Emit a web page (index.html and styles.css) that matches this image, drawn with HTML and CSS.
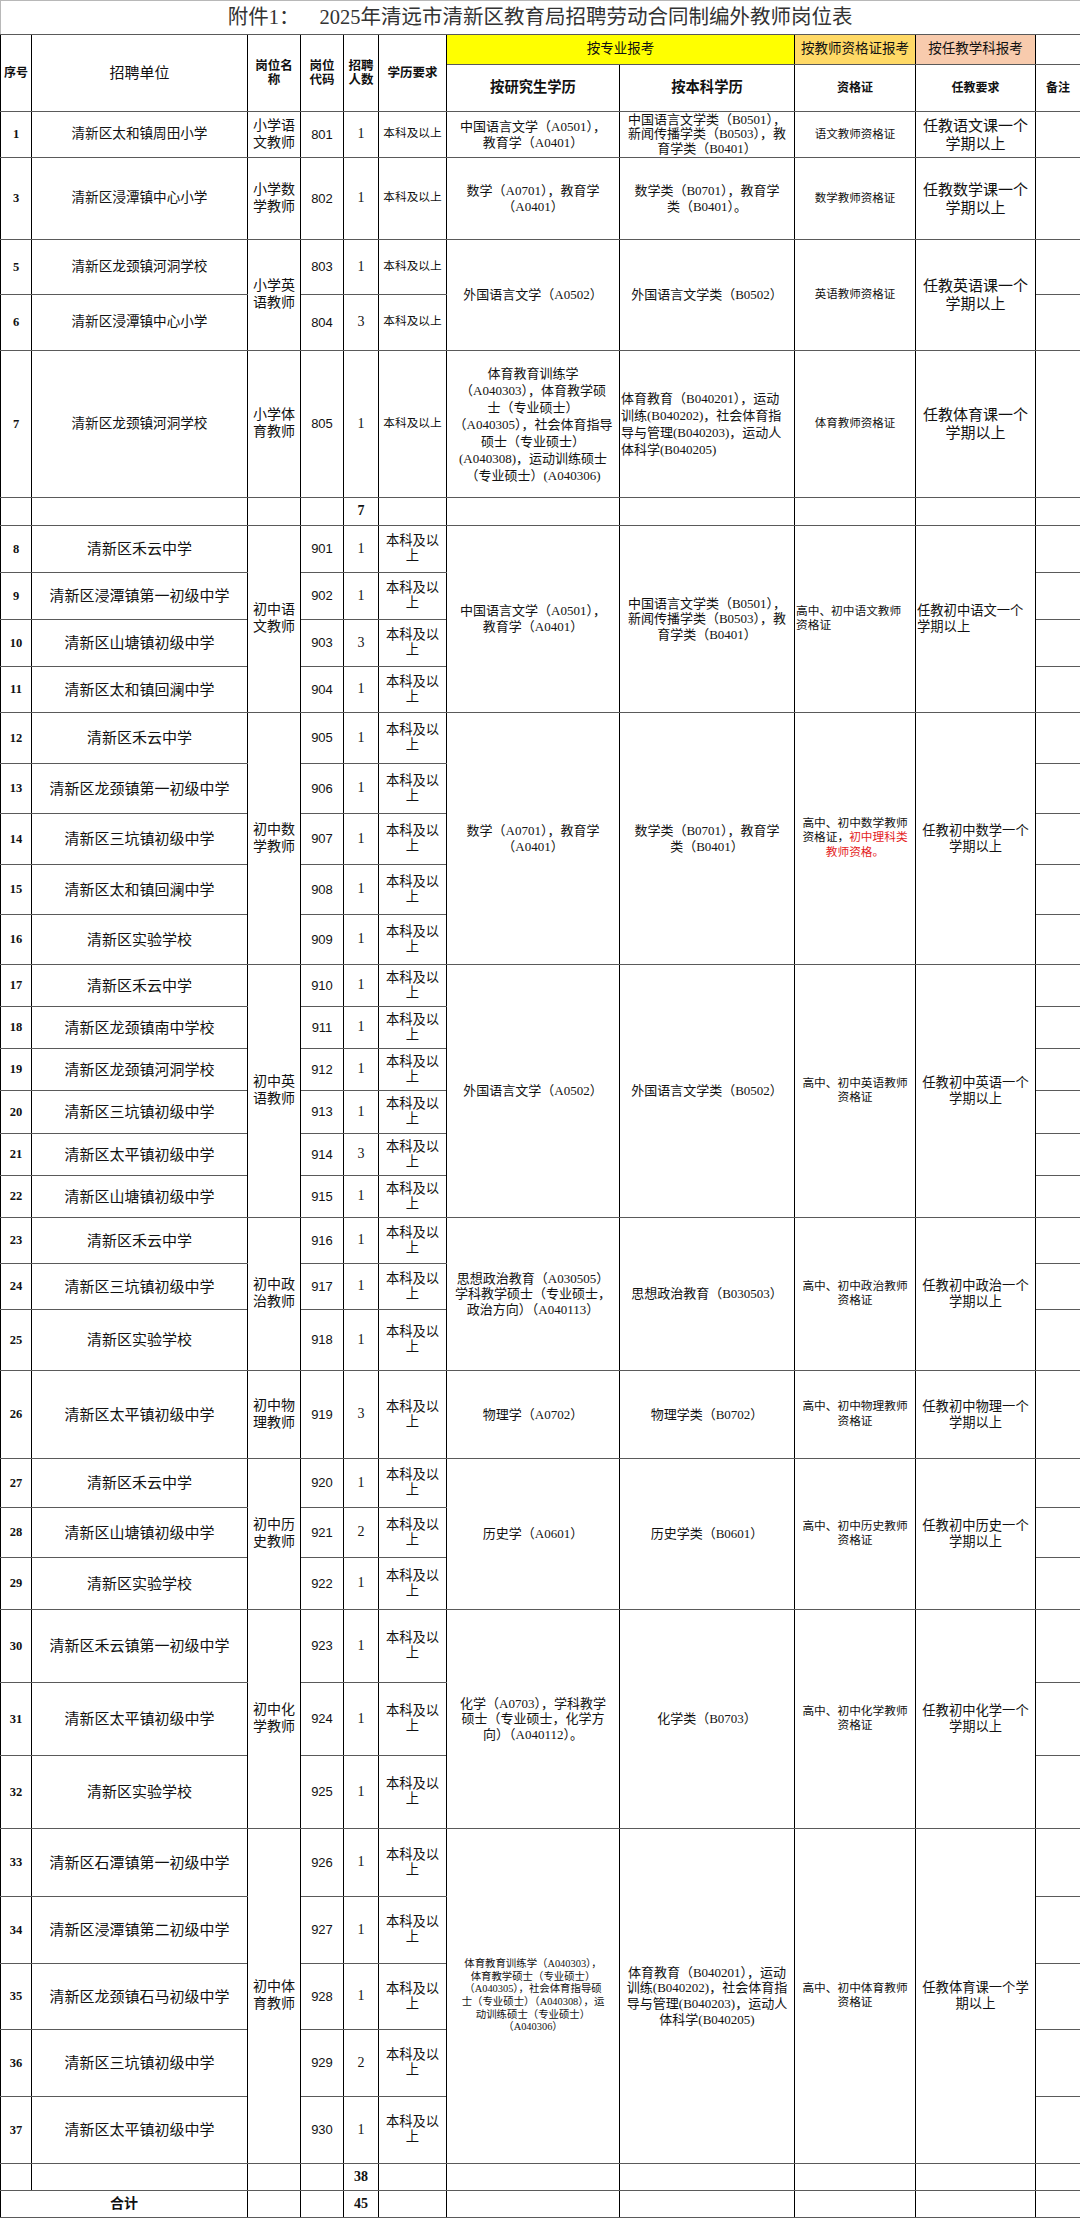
FILE: index.html
```html
<!DOCTYPE html>
<html lang="zh-CN">
<head>
<meta charset="utf-8">
<title>岗位表</title>
<link rel="stylesheet" href="styles.css">
</head>
<body>
<table class="sheet">
<colgroup>
<col class="c1"><col class="c2"><col class="c3"><col class="c4"><col class="c5"><col class="c6"><col class="c7"><col class="c8"><col class="c9"><col class="c10"><col class="c11">
</colgroup>
<tr class="h34"><td class="title" colspan="11">附件1：<span class="gap"></span>2025年清远市清新区教育局招聘劳动合同制编外教师岗位表</td></tr>
<tr class="h30">
<td class="hd no" rowspan="2">序号</td>
<td class="hd unit-h" rowspan="2">招聘单位</td>
<td class="hd sm" rowspan="2">岗位名<br>称</td>
<td class="hd sm" rowspan="2">岗位<br>代码</td>
<td class="hd sm" rowspan="2">招聘<br>人数</td>
<td class="hd sm" rowspan="2">学历要求</td>
<td class="grp yellow" colspan="2">按专业报考</td>
<td class="grp orange">按教师资格证报考</td>
<td class="grp peach">按任教学科报考</td>
<td></td>
</tr>
<tr class="h47">
<td class="hd mid">按研究生学历</td>
<td class="hd mid">按本科学历</td>
<td class="hd xs">资格证</td>
<td class="hd xs">任教要求</td>
<td class="hd xs">备注</td>
</tr>

<tr class="h46">
<td class="no">1</td><td class="unit">清新区太和镇周田小学</td><td class="post">小学语<br>文教师</td><td class="code">801</td><td class="cnt">1</td><td class="edu">本科及以上</td>
<td class="maj">中国语言文学（A0501），<br>教育学（A0401）</td>
<td class="maj tight">中国语言文学类（B0501），<br>新闻传播学类（B0503），教<br>育学类（B0401）</td>
<td class="cert">语文教师资格证</td><td class="req">任教语文课一个<br>学期以上</td><td></td>
</tr>
<tr class="h82">
<td class="no">3</td><td class="unit">清新区浸潭镇中心小学</td><td class="post">小学数<br>学教师</td><td class="code">802</td><td class="cnt">1</td><td class="edu">本科及以上</td>
<td class="maj">数学（A0701），教育学<br>（A0401）</td>
<td class="maj">数学类（B0701），教育学<br>类（B0401）。</td>
<td class="cert">数学教师资格证</td><td class="req">任教数学课一个<br>学期以上</td><td></td>
</tr>
<tr class="h55">
<td class="no">5</td><td class="unit">清新区龙颈镇河洞学校</td><td class="post" rowspan="2">小学英<br>语教师</td><td class="code">803</td><td class="cnt">1</td><td class="edu">本科及以上</td>
<td class="maj" rowspan="2">外国语言文学（A0502）</td>
<td class="maj" rowspan="2">外国语言文学类（B0502）</td>
<td class="cert" rowspan="2">英语教师资格证</td><td class="req" rowspan="2">任教英语课一个<br>学期以上</td><td></td>
</tr>
<tr class="h56">
<td class="no">6</td><td class="unit">清新区浸潭镇中心小学</td><td class="code">804</td><td class="cnt">3</td><td class="edu">本科及以上</td><td></td>
</tr>
<tr class="h147">
<td class="no">7</td><td class="unit">清新区龙颈镇河洞学校</td><td class="post">小学体<br>育教师</td><td class="code">805</td><td class="cnt">1</td><td class="edu">本科及以上</td>
<td class="maj loose">体育教育训练学<br>（A040303），体育教学硕<br>士（专业硕士）<br>（A040305），社会体育指导<br>硕士（专业硕士）<br>(A040308)，运动训练硕士<br>（专业硕士）(A040306)</td>
<td class="maj loose l">体育教育（B040201），运动<br>训练(B040202)，社会体育指<br>导与管理(B040203)，运动人<br>体科学(B040205)</td>
<td class="cert">体育教师资格证</td><td class="req">任教体育课一个<br>学期以上</td><td></td>
</tr>
<tr class="h28">
<td></td><td></td><td></td><td></td><td class="cnt b">7</td><td></td><td></td><td></td><td></td><td></td><td></td>
</tr>

<tr class="h47">
<td class="no">8</td><td class="unit lg">清新区禾云中学</td><td class="post" rowspan="4">初中语<br>文教师</td><td class="code">901</td><td class="cnt">1</td><td class="edu lg">本科及以上</td>
<td class="maj" rowspan="4">中国语言文学（A0501），<br>教育学（A0401）</td>
<td class="maj" rowspan="4">中国语言文学类（B0501），<br>新闻传播学类（B0503），教<br>育学类（B0401）</td>
<td class="cert2 l" rowspan="4">高中、初中语文教师<br>资格证</td><td class="req2 l" rowspan="4">任教初中语文一个<br>学期以上</td><td></td>
</tr>
<tr class="h47"><td class="no">9</td><td class="unit lg">清新区浸潭镇第一初级中学</td><td class="code">902</td><td class="cnt">1</td><td class="edu lg">本科及以上</td><td></td></tr>
<tr class="h47"><td class="no">10</td><td class="unit lg">清新区山塘镇初级中学</td><td class="code">903</td><td class="cnt">3</td><td class="edu lg">本科及以上</td><td></td></tr>
<tr class="h46"><td class="no">11</td><td class="unit lg">清新区太和镇回澜中学</td><td class="code">904</td><td class="cnt">1</td><td class="edu lg">本科及以上</td><td></td></tr>

<tr class="h51">
<td class="no">12</td><td class="unit lg">清新区禾云中学</td><td class="post" rowspan="5">初中数<br>学教师</td><td class="code">905</td><td class="cnt">1</td><td class="edu lg">本科及以上</td>
<td class="maj" rowspan="5">数学（A0701），教育学<br>（A0401）</td>
<td class="maj" rowspan="5">数学类（B0701），教育学<br>类（B0401）</td>
<td class="cert2" rowspan="5">高中、初中数学教师<br>资格证，<span class="red">初中理科类<br>教师资格。</span></td><td class="req2" rowspan="5">任教初中数学一个<br>学期以上</td><td></td>
</tr>
<tr class="h50"><td class="no">13</td><td class="unit lg">清新区龙颈镇第一初级中学</td><td class="code">906</td><td class="cnt">1</td><td class="edu lg">本科及以上</td><td></td></tr>
<tr class="h51"><td class="no">14</td><td class="unit lg">清新区三坑镇初级中学</td><td class="code">907</td><td class="cnt">1</td><td class="edu lg">本科及以上</td><td></td></tr>
<tr class="h50"><td class="no">15</td><td class="unit lg">清新区太和镇回澜中学</td><td class="code">908</td><td class="cnt">1</td><td class="edu lg">本科及以上</td><td></td></tr>
<tr class="h50"><td class="no">16</td><td class="unit lg">清新区实验学校</td><td class="code">909</td><td class="cnt">1</td><td class="edu lg">本科及以上</td><td></td></tr>

<tr class="h42">
<td class="no">17</td><td class="unit lg">清新区禾云中学</td><td class="post" rowspan="6">初中英<br>语教师</td><td class="code">910</td><td class="cnt">1</td><td class="edu lg">本科及以上</td>
<td class="maj" rowspan="6">外国语言文学（A0502）</td>
<td class="maj" rowspan="6">外国语言文学类（B0502）</td>
<td class="cert2" rowspan="6">高中、初中英语教师<br>资格证</td><td class="req2" rowspan="6">任教初中英语一个<br>学期以上</td><td></td>
</tr>
<tr class="h42"><td class="no">18</td><td class="unit lg">清新区龙颈镇南中学校</td><td class="code">911</td><td class="cnt">1</td><td class="edu lg">本科及以上</td><td></td></tr>
<tr class="h42"><td class="no">19</td><td class="unit lg">清新区龙颈镇河洞学校</td><td class="code">912</td><td class="cnt">1</td><td class="edu lg">本科及以上</td><td></td></tr>
<tr class="h43"><td class="no">20</td><td class="unit lg">清新区三坑镇初级中学</td><td class="code">913</td><td class="cnt">1</td><td class="edu lg">本科及以上</td><td></td></tr>
<tr class="h42"><td class="no">21</td><td class="unit lg">清新区太平镇初级中学</td><td class="code">914</td><td class="cnt">3</td><td class="edu lg">本科及以上</td><td></td></tr>
<tr class="h42"><td class="no">22</td><td class="unit lg">清新区山塘镇初级中学</td><td class="code">915</td><td class="cnt">1</td><td class="edu lg">本科及以上</td><td></td></tr>

<tr class="h46">
<td class="no">23</td><td class="unit lg">清新区禾云中学</td><td class="post" rowspan="3">初中政<br>治教师</td><td class="code">916</td><td class="cnt">1</td><td class="edu lg">本科及以上</td>
<td class="maj" rowspan="3">思想政治教育（A030505）<br>学科教学硕士（专业硕士，<br>政治方向）（A040113）</td>
<td class="maj" rowspan="3">思想政治教育（B030503）</td>
<td class="cert2" rowspan="3">高中、初中政治教师<br>资格证</td><td class="req2" rowspan="3">任教初中政治一个<br>学期以上</td><td></td>
</tr>
<tr class="h46"><td class="no">24</td><td class="unit lg">清新区三坑镇初级中学</td><td class="code">917</td><td class="cnt">1</td><td class="edu lg">本科及以上</td><td></td></tr>
<tr class="h61"><td class="no">25</td><td class="unit lg">清新区实验学校</td><td class="code">918</td><td class="cnt">1</td><td class="edu lg">本科及以上</td><td></td></tr>

<tr class="h88">
<td class="no">26</td><td class="unit lg">清新区太平镇初级中学</td><td class="post">初中物<br>理教师</td><td class="code">919</td><td class="cnt">3</td><td class="edu lg">本科及以上</td>
<td class="maj">物理学（A0702）</td><td class="maj">物理学类（B0702）</td>
<td class="cert2">高中、初中物理教师<br>资格证</td><td class="req2">任教初中物理一个<br>学期以上</td><td></td>
</tr>

<tr class="h49">
<td class="no">27</td><td class="unit lg">清新区禾云中学</td><td class="post" rowspan="3">初中历<br>史教师</td><td class="code">920</td><td class="cnt">1</td><td class="edu lg">本科及以上</td>
<td class="maj" rowspan="3">历史学（A0601）</td><td class="maj" rowspan="3">历史学类（B0601）</td>
<td class="cert2" rowspan="3">高中、初中历史教师<br>资格证</td><td class="req2" rowspan="3">任教初中历史一个<br>学期以上</td><td></td>
</tr>
<tr class="h50"><td class="no">28</td><td class="unit lg">清新区山塘镇初级中学</td><td class="code">921</td><td class="cnt">2</td><td class="edu lg">本科及以上</td><td></td></tr>
<tr class="h52"><td class="no">29</td><td class="unit lg">清新区实验学校</td><td class="code">922</td><td class="cnt">1</td><td class="edu lg">本科及以上</td><td></td></tr>

<tr class="h73">
<td class="no">30</td><td class="unit lg">清新区禾云镇第一初级中学</td><td class="post" rowspan="3">初中化<br>学教师</td><td class="code">923</td><td class="cnt">1</td><td class="edu lg">本科及以上</td>
<td class="maj" rowspan="3">化学（A0703），学科教学<br>硕士（专业硕士，化学方<br>向）（A040112）。</td>
<td class="maj" rowspan="3">化学类（B0703）</td>
<td class="cert2" rowspan="3">高中、初中化学教师<br>资格证</td><td class="req2" rowspan="3">任教初中化学一个<br>学期以上</td><td></td>
</tr>
<tr class="h73"><td class="no">31</td><td class="unit lg">清新区太平镇初级中学</td><td class="code">924</td><td class="cnt">1</td><td class="edu lg">本科及以上</td><td></td></tr>
<tr class="h73"><td class="no">32</td><td class="unit lg">清新区实验学校</td><td class="code">925</td><td class="cnt">1</td><td class="edu lg">本科及以上</td><td></td></tr>

<tr class="h68">
<td class="no">33</td><td class="unit lg">清新区石潭镇第一初级中学</td><td class="post" rowspan="5">初中体<br>育教师</td><td class="code">926</td><td class="cnt">1</td><td class="edu lg">本科及以<br>上</td>
<td class="maj tiny" rowspan="5">体育教育训练学（A040303），<br>体育教学硕士（专业硕士）<br>（A040305），社会体育指导硕<br>士（专业硕士）（A040308），运<br>动训练硕士（专业硕士）<br>（A040306）</td>
<td class="maj" rowspan="5">体育教育（B040201），运动<br>训练(B040202)，社会体育指<br>导与管理(B040203)，运动人<br>体科学(B040205)</td>
<td class="cert2" rowspan="5">高中、初中体育教师<br>资格证</td><td class="req2" rowspan="5">任教体育课一个学<br>期以上</td><td></td>
</tr>
<tr class="h67"><td class="no">34</td><td class="unit lg">清新区浸潭镇第二初级中学</td><td class="code">927</td><td class="cnt">1</td><td class="edu lg">本科及以<br>上</td><td></td></tr>
<tr class="h66"><td class="no">35</td><td class="unit lg">清新区龙颈镇石马初级中学</td><td class="code">928</td><td class="cnt">1</td><td class="edu lg">本科及以<br>上</td><td></td></tr>
<tr class="h67"><td class="no">36</td><td class="unit lg">清新区三坑镇初级中学</td><td class="code">929</td><td class="cnt">2</td><td class="edu lg">本科及以<br>上</td><td></td></tr>
<tr class="h67"><td class="no">37</td><td class="unit lg">清新区太平镇初级中学</td><td class="code">930</td><td class="cnt">1</td><td class="edu lg">本科及以<br>上</td><td></td></tr>

<tr class="h27">
<td></td><td></td><td></td><td></td><td class="cnt b">38</td><td></td><td></td><td></td><td></td><td></td><td></td>
</tr>
<tr class="h27">
<td class="total" colspan="2">合计</td><td></td><td></td><td class="cnt b">45</td><td></td><td></td><td></td><td></td><td></td><td></td>
</tr>
</table>
</body>
</html>
```

FILE: styles.css
```css
body {
  margin: 0;
  background: #ffffff;
}

.sheet {
  width: 1080px;
  border-collapse: collapse;
  table-layout: fixed;
  font-family: "Liberation Serif", "Noto Sans CJK SC", serif;
  color: #111111;
}

.c1 { width: 31px; }
.c2 { width: 216px; }
.c3 { width: 53px; }
.c4 { width: 43px; }
.c5 { width: 35px; }
.c6 { width: 68px; }
.c7 { width: 173px; }
.c8 { width: 175px; }
.c9 { width: 121px; }
.c10 { width: 120px; }
.c11 { width: 45px; }

.sheet td {
  border-left: 1px solid #000000;
  border-right: 1px solid #000000;
  border-top: 1px solid #5a5a5a;
  border-bottom: 1px solid #5a5a5a;
  padding: 0 1px;
  text-align: center;
  vertical-align: middle;
  line-height: 1.2;
  overflow: hidden;
  white-space: nowrap;
}

.h27 { height: 27px; }
.h28 { height: 28px; }
.h30 { height: 30px; }
.h34 { height: 34px; }
.h42 { height: 42px; }
.h43 { height: 43px; }
.h46 { height: 46px; }
.h47 { height: 47px; }
.h49 { height: 49px; }
.h50 { height: 50px; }
.h51 { height: 51px; }
.h52 { height: 52px; }
.h55 { height: 55px; }
.h56 { height: 56px; }
.h61 { height: 61px; }
.h66 { height: 66px; }
.h67 { height: 67px; }
.h68 { height: 68px; }
.h73 { height: 73px; }
.h82 { height: 82px; }
.h88 { height: 88px; }
.h147 { height: 147px; }

.sheet td.title {
  border: 1px solid #b8b8b8;
  border-bottom: 1px solid #5a5a5a;
  font-size: 20.5px;
  color: #333333;
  text-align: center;
  padding-left: 0;
}
.gap {
  display: inline-block;
  width: 20px;
}

.hd { font-weight: bold; }
.hd.no { font-size: 12px; }
.hd.unit-h { font-weight: normal; font-size: 15px; }
.hd.sm { font-size: 12.5px; line-height: 1.15; }
.hd.mid { font-size: 14.3px; }
.hd.xs { font-size: 12px; }

.grp { font-size: 13.5px; }
.yellow { background: #ffff00; }
.orange { background: #ffd966; }
.peach { background: #f8cbad; }

.no { font-weight: bold; font-size: 12.5px; }
.unit { font-size: 13.6px; }
.unit.lg { font-size: 15px; }
.post { font-size: 14px; line-height: 1.15; }
.code { font-family: "Liberation Sans", "Noto Sans CJK SC", sans-serif; font-size: 13px; }
.cnt { font-size: 14px; }
.b { font-weight: bold; }
.edu { font-size: 11.7px; }
.edu.lg { font-size: 13.3px; line-height: 1.12; white-space: normal; }
.maj { font-size: 13px; line-height: 1.25; }
.maj.tight { line-height: 14.5px; }
.maj.loose { line-height: 17px; }
.maj.tiny { font-size: 10.4px; line-height: 12.6px; }
.cert { font-size: 11.5px; }
.cert2 { font-size: 11.7px; line-height: 1.25; }
.req { font-size: 15px; line-height: 1.2; }
.req2 { font-size: 13.3px; line-height: 1.2; }
.l { text-align: left !important; }
.red { color: #e41e1e; }
.total { font-weight: bold; font-size: 14px; }
```
